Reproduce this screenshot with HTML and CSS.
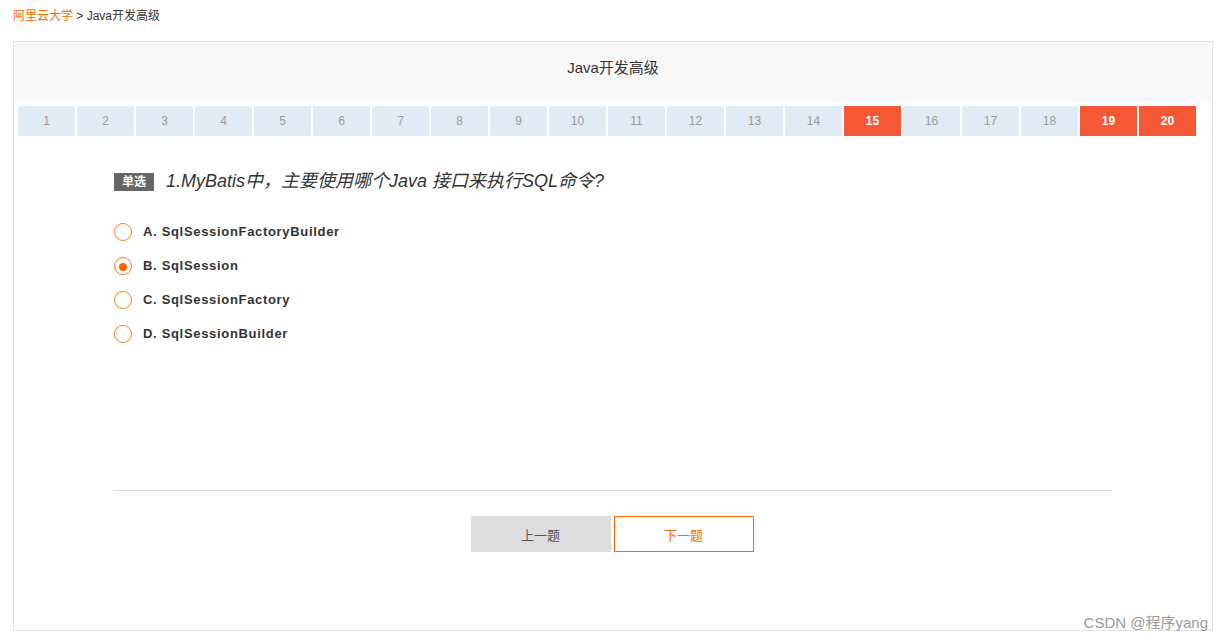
FILE: index.html
```html
<!DOCTYPE html>
<html lang="zh">
<head>
<meta charset="utf-8">
<title>Java开发高级</title>
<link rel="stylesheet" href="styles.css">
</head>
<body>
<div class="crumb"><a class="crumb-link">阿里云大学</a> &gt; Java开发高级</div>
<div class="panel">
  <div class="panel-head">Java开发高级</div>
  <div class="tabs">
    <span class="tab">1</span><span class="tab">2</span><span class="tab">3</span><span class="tab">4</span><span class="tab">5</span>
    <span class="tab">6</span><span class="tab">7</span><span class="tab">8</span><span class="tab">9</span><span class="tab">10</span>
    <span class="tab">11</span><span class="tab">12</span><span class="tab">13</span><span class="tab">14</span><span class="tab on">15</span>
    <span class="tab">16</span><span class="tab">17</span><span class="tab">18</span><span class="tab on">19</span><span class="tab on">20</span>
  </div>
  <div class="body">
    <div class="question">
      <span class="badge">单选</span>
      <span class="qtext">1.MyBatis中，主要使用哪个Java 接口来执行SQL命令?</span>
    </div>
    <ul class="options">
      <li class="opt"><span class="radio"></span><span class="opt-text">A. SqlSessionFactoryBuilder</span></li>
      <li class="opt"><span class="radio checked"></span><span class="opt-text">B. SqlSession</span></li>
      <li class="opt"><span class="radio"></span><span class="opt-text">C. SqlSessionFactory</span></li>
      <li class="opt"><span class="radio"></span><span class="opt-text">D. SqlSessionBuilder</span></li>
    </ul>
    <div class="divider"></div>
    <div class="btns">
      <button class="btn prev">上一题</button>
      <button class="btn next">下一题</button>
    </div>
  </div>
</div>
<div class="watermark">CSDN @程序yang</div>
</body>
</html>
```
FILE: styles.css
```css
* { box-sizing: border-box; }
html, body { margin: 0; padding: 0; background: #fff; }
body {
  font-family: "Liberation Sans", Arial, "Noto Sans CJK SC", sans-serif;
  color: #333;
  width: 1223px;
  height: 640px;
  position: relative;
  overflow: hidden;
}
.crumb {
  height: 41px;
  padding: 8px 0 0 13px;
  font-size: 12px;
  line-height: 16px;
  color: #333;
}
.crumb-link { color: #ff6a00; }
.panel {
  margin-left: 13px;
  width: 1200px;
  height: 590px;
  border: 1px solid #e3e3e3;
}
.panel-head {
  height: 60px;
  background: #f8f8f8;
  text-align: center;
  font-size: 15px;
  line-height: 52px;
  color: #333;
}
.tabs {
  margin-top: 4px;
  padding-left: 4px;
  display: flex;
  gap: 2px;
}
.tab {
  width: 57px;
  height: 30px;
  background: #e1ebf5;
  color: #999;
  font-size: 12px;
  line-height: 30px;
  text-align: center;
}
.tab.on {
  background: #f45834;
  color: #fff;
  font-weight: bold;
}
.body {
  padding: 37px 100px 0 100px;
}
.question {
  display: flex;
  align-items: center;
  height: 18px;
}
.badge {
  width: 40px;
  height: 18px;
  background: #666;
  color: #fff;
  font-size: 12px;
  font-weight: bold;
  line-height: 18px;
  text-align: center;
}
.qtext {
  margin-left: 12px;
  font-size: 18px;
  line-height: 18px;
  font-style: italic;
  color: #333;
  position: relative;
  top: -1px;
}
.options {
  list-style: none;
  margin: 24px 0 0 0;
  padding: 0;
}
.opt {
  height: 34px;
  display: flex;
  align-items: center;
  font-size: 13px;
  font-weight: bold;
  color: #333;
  letter-spacing: 0.68px;
}
.opt-text {
  position: relative;
  top: -1px;
}
.radio {
  width: 18px;
  height: 18px;
  border: 1px solid #ff7a1a;
  border-radius: 50%;
  margin-right: 11px;
  display: flex;
  align-items: center;
  justify-content: center;
}
.radio.checked::after {
  content: "";
  width: 8px;
  height: 8px;
  margin-top: 1px;
  border-radius: 50%;
  background: #ff6600;
}
.divider {
  margin-top: 139px;
  height: 1px;
  background: #dddddd;
}
.btns {
  margin-top: 25px;
  display: flex;
  justify-content: center;
  gap: 3px;
  padding-right: 2px;
}
.btn {
  width: 140px;
  height: 36px;
  font-family: "Liberation Sans", Arial, "Noto Sans CJK SC", sans-serif;
  font-size: 13px;
  padding: 0;
  cursor: pointer;
}
.btn.prev {
  background: #dddddd;
  border: none;
  color: #555;
}
.btn.next {
  background: #fff;
  border: 1px solid #ff6a00;
  color: #ff6a00;
}
.watermark {
  position: absolute;
  right: 15px;
  bottom: 8px;
  font-size: 15px;
  color: #999;
  font-family: "Liberation Sans", Arial, "Noto Sans CJK SC", sans-serif;
}
```
